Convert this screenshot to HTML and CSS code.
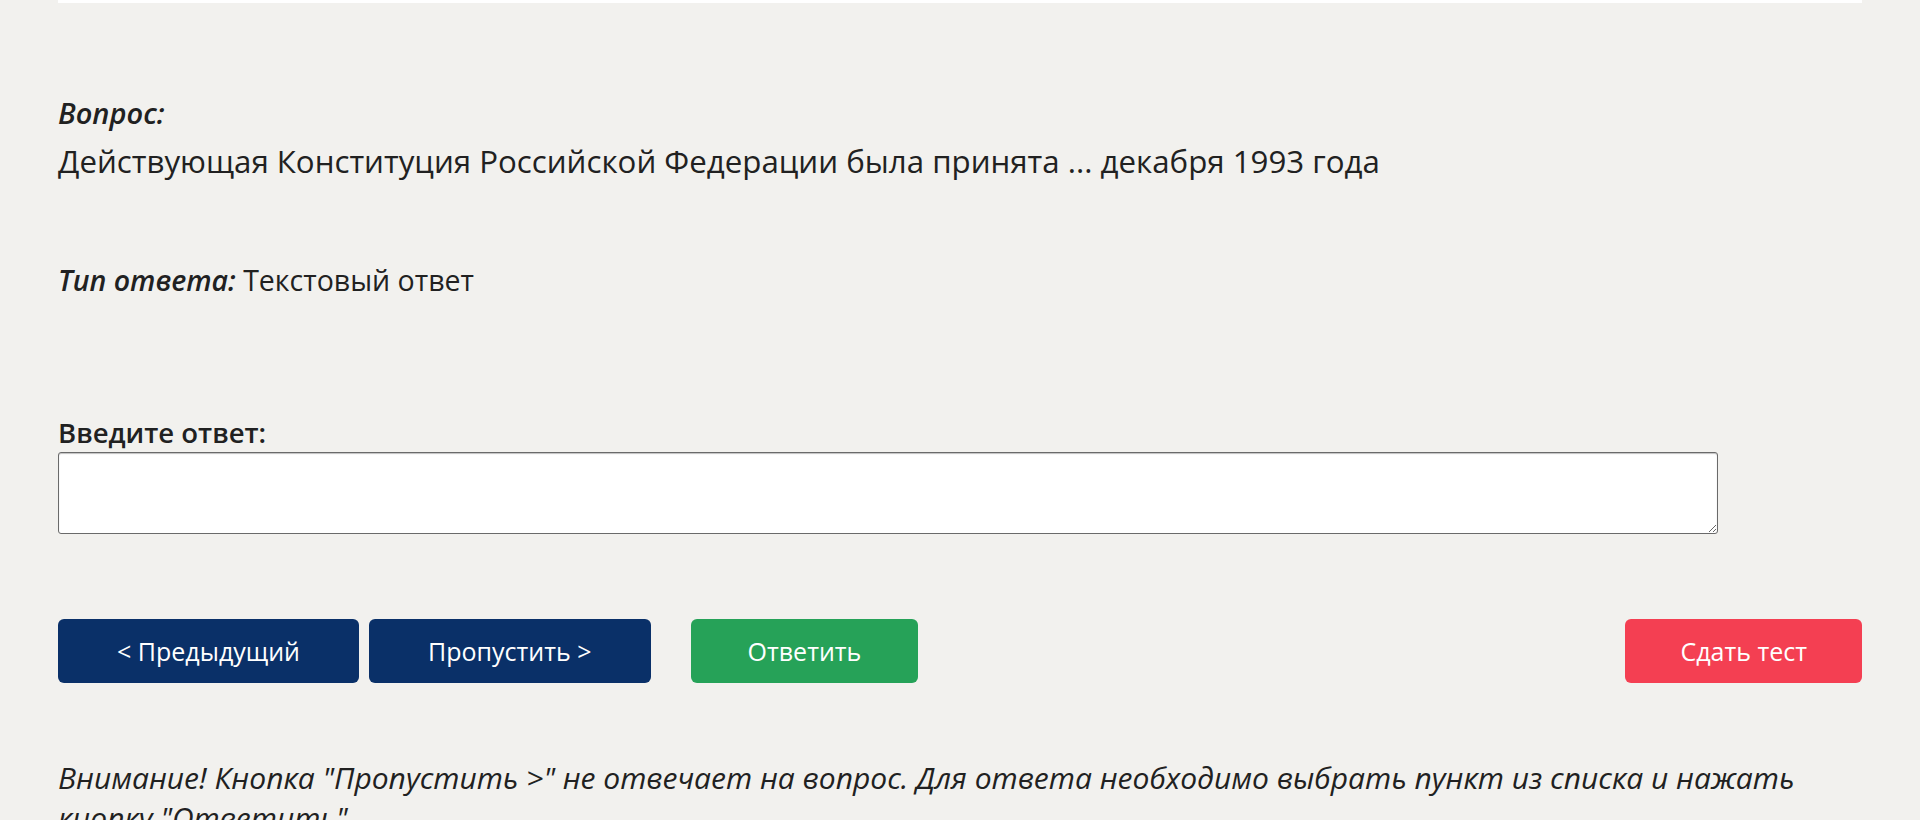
FILE: index.html
```html
<!DOCTYPE html>
<html lang="ru">
<head>
<meta charset="utf-8">
<title>Вопрос</title>
<link rel="stylesheet" href="styles.css">
</head>
<body>
<div class="topbar"></div>
<main class="content">
  <section class="question">
    <div class="q-label">Вопрос:</div>
    <div class="q-text">Действующая Конституция Российской Федерации была принята ... декабря 1993 года</div>
  </section>
  <div class="answer-type"><span class="at-label">Тип ответа:</span> Текстовый ответ</div>
  <form class="answer-form">
    <label class="answer-label" for="answer">Введите ответ:</label>
    <textarea id="answer" class="answer-input"></textarea>
    <div class="actions">
      <div class="nav-group">
        <button type="button" class="btn btn-navy">&lt; Предыдущий</button>
        <button type="button" class="btn btn-navy">Пропустить &gt;</button>
        <button type="button" class="btn btn-green btn-answer">Ответить</button>
      </div>
      <button type="button" class="btn btn-red">Сдать тест</button>
    </div>
  </form>
  <p class="warning">Внимание! Кнопка "Пропустить &gt;" не отвечает на вопрос. Для ответа необходимо выбрать пункт из списка и нажать кнопку "Ответить".</p>
</main>
</body>
</html>
```
FILE: styles.css
```css
html, body {
  margin: 0;
  padding: 0;
  background: #f2f1ee;
  overflow: hidden;
}
body {
  font-family: "Open Sans", "Noto Sans", sans-serif;
  color: #212121;
}
.topbar {
  height: 3px;
  background: #ffffff;
  margin: 0 58px;
}
.content {
  padding: 0 58px;
}
.question {
  margin-top: 90px;
}
.q-label {
  font-size: 29px;
  font-style: italic;
  font-weight: 600;
  line-height: 40px;
}
.q-text {
  margin-top: 4px;
  font-size: 31.25px;
  line-height: 48px;
}
.answer-type {
  margin-top: 73px;
  font-size: 28.5px;
  line-height: 44px;
}
.at-label {
  font-style: italic;
  font-weight: 600;
}
.answer-form {
  margin-top: 112px;
  display: flex;
  flex-direction: column;
  align-items: flex-start;
}
.answer-label {
  font-size: 27.5px;
  font-weight: 600;
  line-height: 38px;
}
.answer-input {
  width: 1660px;
  height: 82px;
  box-sizing: border-box;
  margin: 0;
  border: 1px solid #6a6a6a;
  border-radius: 3px;
  background: #fff;
  box-shadow: inset 0 1px 1px rgba(0,0,0,0.25);
  resize: vertical;
}
.actions {
  margin-top: 85px;
  width: 100%;
  display: flex;
  justify-content: space-between;
}
.nav-group {
  display: flex;
  gap: 10px;
}
.btn {
  height: 64px;
  padding: 0 59px;
  border: none;
  border-radius: 6px;
  color: #fff;
  font-family: "Open Sans", "Noto Sans", sans-serif;
  font-size: 25px;
}
.btn-navy { background: #0a3068; }
.btn-green { background: #26a258; padding: 0 57px; }
.btn-red { background: #f43f52; padding: 0 55px; }
.btn-answer { margin-left: 30px; }
.warning {
  margin: 75px 0 0;
  font-size: 30px;
  font-style: italic;
  line-height: 40px;
}
```
